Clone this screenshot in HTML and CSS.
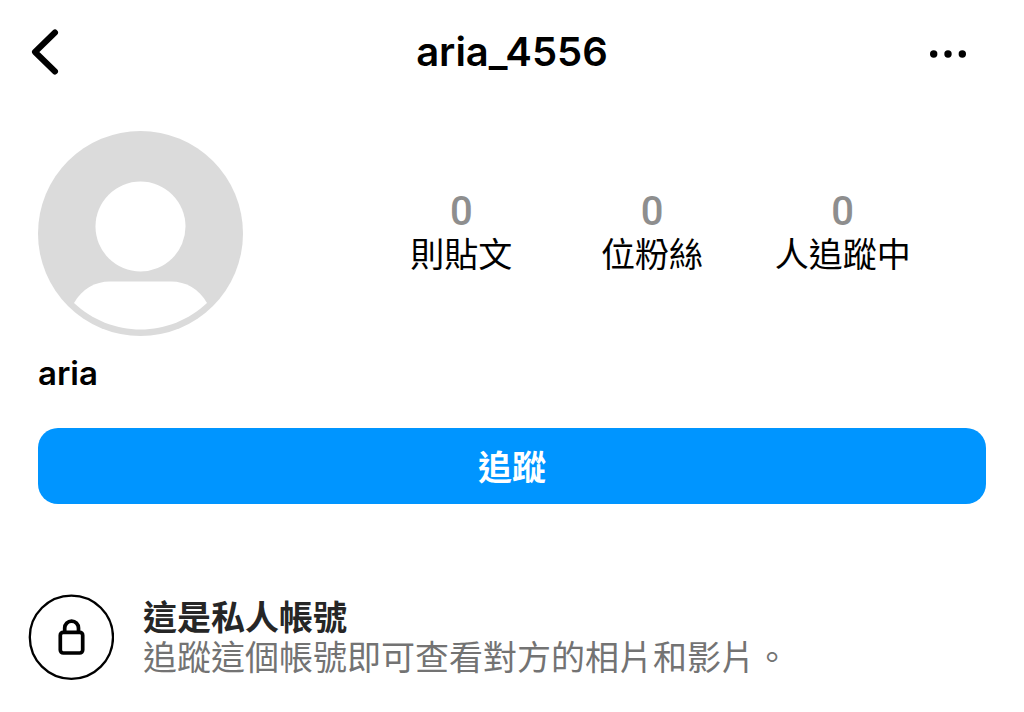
FILE: index.html
```html
<!DOCTYPE html>
<html lang="zh-Hant">
<head>
    <meta charset="UTF-8">
    <meta name="viewport" content="width=device-width, initial-scale=1.0">
    <title>aria_4556</title>
    <link rel="stylesheet" href="styles.css">
</head>
<body>
    <header class="topbar">
        <button class="icon-button" type="button" aria-label="返回">
            <svg width="30" height="48" viewBox="0 0 30 48" fill="none" stroke="#000" stroke-width="6" stroke-linecap="round" stroke-linejoin="round">
                <path d="M25 4.500L5 24L25 43.500"/>
            </svg>
        </button>
        <h1 class="username">aria_4556</h1>
        <button class="icon-button more" type="button" aria-label="更多選項">
            <svg width="38" height="8" viewBox="0 0 38 8">
                <circle cx="3.700" cy="4" r="3.700"/>
                <circle cx="18" cy="4" r="3.700"/>
                <circle cx="32.300" cy="4" r="3.700"/>
            </svg>
        </button>
    </header>
    <main>
        <section class="profile">
            <svg class="avatar" viewBox="0 0 205 205" role="img" aria-label="aria">
                <circle cx="102.500" cy="102.500" r="102.500" fill="#dbdbdb"/>
                <circle cx="102.500" cy="95.500" r="45" fill="#fff"/>
                <path d="M36 172C44 158 57 150.500 72 150.500H133C148 150.500 161 158 169 172C151 189 127 198.500 102.500 198.500S54 189 36 172Z" fill="#fff"/>
            </svg>
            <ul class="stats">
                <li><span class="count">0</span><span class="label">則貼文</span></li>
                <li><span class="count">0</span><span class="label">位粉絲</span></li>
                <li><span class="count">0</span><span class="label">人追蹤中</span></li>
            </ul>
        </section>
        <h2 class="name">aria</h2>
        <button class="follow" type="button">追蹤</button>
        <section class="private">
            <svg class="lock" width="86" height="86" viewBox="0 0 86 86" fill="none" stroke="#000">
                <circle cx="43.400" cy="43.200" r="41.600" stroke-width="2.300"/>
                <rect x="32.300" y="38.300" width="22.400" height="20.700" rx="3" stroke-width="3.700"/>
                <path d="M36.700 38V34A6.900 6.900 0 0 1 50.500 34V38" stroke-width="3.700"/>
            </svg>
            <div class="private-text">
                <h3>這是私人帳號</h3>
                <p>追蹤這個帳號即可查看對方的相片和影片。</p>
            </div>
        </section>
    </main>
</body>
</html>
```

FILE: styles.css
```css
* {
    box-sizing: border-box;
}
body {
    margin: 0;
    background-color: #fff;
    color: #000;
    font-family: Inter, 'Noto Sans CJK TC', sans-serif;
    font-size: 34px;
}
h1, h2, h3, p, ul {
    margin: 0;
    padding: 0;
}
button {
    border: none;
    font-family: inherit;
    cursor: pointer;
}
svg {
    display: block;
    flex-shrink: 0;
}
.topbar {
    display: grid;
    grid-template-columns: 1fr auto 1fr;
    align-items: center;
    height: 104px;
    padding: 0 56px 0 30px;
}
.username {
    padding-left: 26px; /* evens out the side paddings */
    font-size: 40px;
    font-weight: 600;
    line-height: 48px;
}
.icon-button {
    justify-self: start;
    padding: 0;
    background: none;
}
.more {
    justify-self: end;
    padding: 20px 0 16px;
}
main {
    padding: 27px 38px 30px;
}
.profile {
    display: flex;
    align-items: center;
}
.avatar {
    width: 205px;
}
.stats {
    flex: 1;
    display: grid;
    grid-template-columns: repeat(3, 1fr);
    padding: 0 48px 2px 123px;
    list-style: none;
    text-align: center;
}
.count, .label {
    display: block;
    line-height: 43px;
    white-space: nowrap;
}
.count {
    color: #8e8e8e;
    font-family: Roboto, sans-serif;
    font-size: 40px;
    font-weight: 500;
}
.name {
    margin-top: 15px;
    font-size: 33px;
    font-weight: 600;
    line-height: 44px;
}
.follow {
    display: block;
    width: 100%;
    height: 76px;
    margin-top: 33px;
    padding: 0 0 2px;
    border-radius: 20px;
    background-color: #0095ff;
    color: #fff;
    font-size: 34px;
    font-weight: 600;
}
.private {
    display: flex;
    align-items: center;
    gap: 29px;
    margin: 90px 0 0 -10px;
}
.private-text {
    padding-top: 2px;
    line-height: 40px;
}
.private h3 {
    color: #262626;
    font-size: 34px;
    font-weight: 600;
}
.private p {
    color: #737373;
    font-weight: 400;
}
```
